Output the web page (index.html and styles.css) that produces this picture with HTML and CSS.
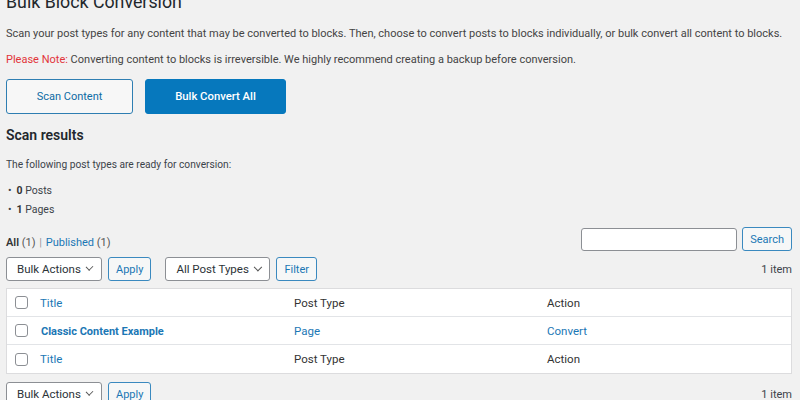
FILE: index.html
```html
<!DOCTYPE html>
<html>
<head>
<meta charset="utf-8">
<link rel="stylesheet" href="styles.css">
</head>
<body>
<div class="wrap">
  <h1 class="title">Bulk Block Conversion</h1>
  <p class="intro">Scan your post types for any content that may be converted to blocks. Then, choose to convert posts to blocks individually, or bulk convert all content to blocks.</p>
  <p class="intro second"><span class="note">Please Note:</span> Converting content to blocks is irreversible. We highly recommend creating a backup before conversion.</p>
  <div class="actions">
    <button class="btn-lg btn-secondary">Scan Content</button>
    <button class="btn-lg btn-primary">Bulk Convert All</button>
  </div>
  <h2 class="subtitle">Scan results</h2>
  <p class="small">The following post types are ready for conversion:</p>
  <ul class="counts">
    <li><b>0</b> Posts</li>
    <li><b>1</b> Pages</li>
  </ul>
  <div class="filters-row">
    <div class="subsubsub"><span class="cur">All</span> <span class="cnt">(1)</span> <span class="sep">|</span> <a class="link">Published</a> <span class="cnt">(1)</span></div>
    <div class="search">
      <input class="search-input" type="text">
      <button class="btn">Search</button>
    </div>
  </div>
  <div class="tablenav">
    <div class="tn-left">
      <div class="select w-bulk">Bulk Actions<span class="chev"></span></div>
      <button class="btn">Apply</button>
      <div class="select w-types ml">All Post Types<span class="chev"></span></div>
      <button class="btn">Filter</button>
    </div>
    <div class="items">1 item</div>
  </div>
  <div class="table">
    <div class="row head">
      <div class="c-cb"><span class="cb"></span></div>
      <div class="c-title"><a class="link">Title</a></div>
      <div class="c-type">Post Type</div>
      <div class="c-act">Action</div>
    </div>
    <div class="row body">
      <div class="c-cb"><span class="cb"></span></div>
      <div class="c-title"><a class="link strong">Classic Content Example</a></div>
      <div class="c-type"><a class="link">Page</a></div>
      <div class="c-act"><a class="link">Convert</a></div>
    </div>
    <div class="row head foot">
      <div class="c-cb"><span class="cb"></span></div>
      <div class="c-title"><a class="link">Title</a></div>
      <div class="c-type">Post Type</div>
      <div class="c-act">Action</div>
    </div>
  </div>
  <div class="tablenav bottom">
    <div class="tn-left">
      <div class="select w-bulk">Bulk Actions<span class="chev"></span></div>
      <button class="btn">Apply</button>
    </div>
    <div class="items">1 item</div>
  </div>
</div>
</body>
</html>
```
FILE: styles.css
```css
html, body {
  margin: 0;
  padding: 0;
  background: #f1f1f1;
  overflow: hidden;
}
body {
  font-family: "Roboto", "Liberation Sans", sans-serif;
  font-size: 11px;
  color: #3c434a;
  white-space: nowrap;
}
.wrap {
  padding: 0 8px 0 6px;
}
.title {
  font-size: 17.8px;
  font-weight: 400;
  color: #23282d;
  margin: -10px 0 0 0;
  line-height: 24px;
}
.intro {
  margin: 13px 0 0;
  line-height: 14px;
  font-size: 11px;
  color: #444;
}
.intro.second { margin-top: 12px; }
.note { color: #e2343a; }
.actions {
  display: flex;
  gap: 12px;
  margin-top: 12px;
}
.btn-lg {
  height: 35px;
  font: inherit;
  font-size: 11px;
  border-radius: 3px;
  padding: 0;
  cursor: pointer;
}
.btn-secondary {
  width: 127px;
  background: #f7f7f7;
  border: 1px solid #2e7eb2;
  color: #0e6ba4;
}
.btn-primary {
  width: 141px;
  background: #0678bd;
  border: 1px solid #0678bd;
  color: #fff;
  font-weight: 500;
  font-size: 11.3px;
}
.subtitle {
  font-size: 14px;
  font-weight: 600;
  color: #23282d;
  margin: 11px 0 0;
  line-height: 20px;
}
.small {
  font-size: 10.2px;
  margin: 12px 0 0;
  line-height: 16px;
}
.counts {
  list-style: none;
  padding: 0 0 0 2px;
  margin: 8px 0 0;
  font-size: 10.5px;
}
.counts li {
  line-height: 19px;
}
.counts li::before {
  content: "•";
  margin-right: 5px;
}
.counts b { font-weight: 700; color: #333; }
.filters-row {
  display: flex;
  justify-content: space-between;
  align-items: flex-start;
  margin-top: 8px;
}
.subsubsub {
  font-size: 11px;
  line-height: 16px;
  padding-top: 8px;
}
.cur { color: #333; font-weight: 600; }
.cnt { color: #555; }
.sep { color: #999; margin: 0 1px; }
.link { color: #1b77b5; text-decoration: none; }
.strong { font-weight: 700; font-size: 11px; }
.search { display: flex; gap: 5px; align-items: center; }
.search-input {
  width: 156px;
  height: 23px;
  box-sizing: border-box;
  border: 1px solid #8c8f94;
  border-radius: 3px;
  background: #fff;
  margin: 0;
}
.btn {
  height: 24px;
  box-sizing: border-box;
  padding: 0 7px;
  font: inherit;
  font-size: 11px;
  color: #1b77b5;
  background: #f6f7f7;
  border: 1px solid #3a89bf;
  border-radius: 3px;
}
.tablenav {
  display: flex;
  justify-content: space-between;
  align-items: center;
  margin-top: 6px;
}
.tn-left { display: flex; gap: 6px; align-items: center; }
.select {
  height: 24px;
  box-sizing: border-box;
  border: 1px solid #8c8f94;
  border-radius: 3px;
  background: #fff;
  font-size: 11.5px;
  color: #2c3338;
  padding: 0 8px 0 10px;
  display: flex;
  align-items: center;
  justify-content: space-between;
}
.w-bulk { width: 96px; }
.w-types { width: 105px; }
.select.ml { margin-left: 8px; }
.chev {
  width: 5px;
  height: 5px;
  border-right: 1.4px solid #555;
  border-bottom: 1.4px solid #555;
  transform: rotate(45deg);
  margin: -4px 1px 0 6px;
}
.items { font-size: 11px; color: #3c434a; }
.table {
  margin-top: 7px;
  background: #fff;
  border: 1px solid #dcdcde;
}
.row {
  display: flex;
  align-items: center;
  height: 28px;
  box-sizing: border-box;
  border-bottom: 1px solid #e2e4e7;
  font-size: 11.5px;
}
.row.foot { border-bottom: 0; height: 28px; }
.c-cb { width: 33px; box-sizing: border-box; padding-left: 8px; display: flex; }
.cb {
  width: 11px;
  height: 11px;
  border: 1px solid #8c8f94;
  border-radius: 3px;
  background: #fff;
}
.c-title { width: 254px; }
.row.body .c-title { padding-left: 1px; width: 253px; }
.c-type { width: 253px; color: #333; }
.c-act { color: #333; }
.tablenav.bottom { margin-top: 8px; }
```
